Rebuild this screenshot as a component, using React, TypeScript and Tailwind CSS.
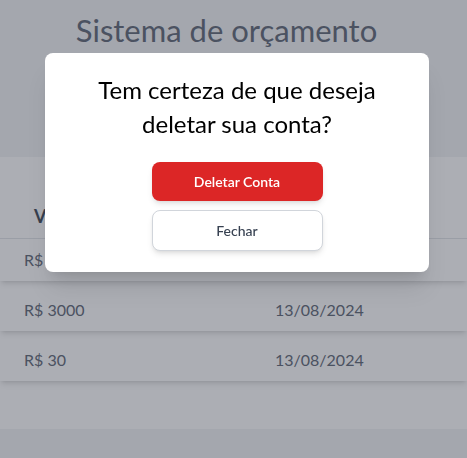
import React from 'react';

type Gasto = { valor: number; data: string };

const gastos: Gasto[] = [
    { valor: 150, data: '13/08/2024' },
    { valor: 3000, data: '13/08/2024' },
    { valor: 30, data: '13/08/2024' },
];

const DeleteModal: React.FC = () => {
    return (
        <div className="fixed inset-0 z-40 bg-[#111827]/35">
            <div className="flex justify-center pt-[53px] pl-[7px]">
                <div className="w-96 bg-white rounded-lg shadow-xl px-5 pt-5 pb-[21px] flex flex-col items-center">
                    <h2 className="text-2xl leading-[34px] text-black text-center w-72">
                        Tem certeza de que deseja deletar sua conta?
                    </h2>
                    <button className="mt-[21px] w-[171px] h-[39px] bg-[#dc2626] text-white text-sm font-semibold rounded-lg shadow-md">
                        Deletar Conta
                    </button>
                    <button className="mt-[9px] w-[171px] h-[41px] bg-white border border-[#d1d5db] text-[#374151] text-sm font-medium rounded-lg shadow-md">
                        Fechar
                    </button>
                </div>
            </div>
        </div>
    );
};

const App: React.FC = () => {
    return (
        <div className="min-h-[458px] bg-[#f3f4f6]" style={{ fontFamily: 'Lato, "Noto Sans", sans-serif' }}>
            <header className="h-[157px] pt-[10px] pr-[14px] text-center">
                <h1 className="text-[31px] leading-[40px] text-[#6b7280]">Sistema de orçamento</h1>
            </header>
            <section className="bg-white h-[272px] pt-9">
                <div className="h-[46px] border-b border-[#e5e7eb] grid grid-cols-[275px_1fr] items-center">
                    <span className="pl-[34px] text-lg font-bold text-[#4b5563]">Valor</span>
                    <span className="pl-[10px] text-lg font-bold text-[#4b5563]">Data</span>
                </div>
                <div className="flex flex-col gap-2">
                    {gastos.map((g, i) => (
                        <div key={i} className="h-[42px] bg-white shadow-md grid grid-cols-[275px_1fr] items-center text-base text-[#6b7280]">
                            <span className="pl-6">R$ {g.valor}</span>
                            <span>{g.data}</span>
                        </div>
                    ))}
                </div>
            </section>
            <DeleteModal />
        </div>
    );
};

export default App;
